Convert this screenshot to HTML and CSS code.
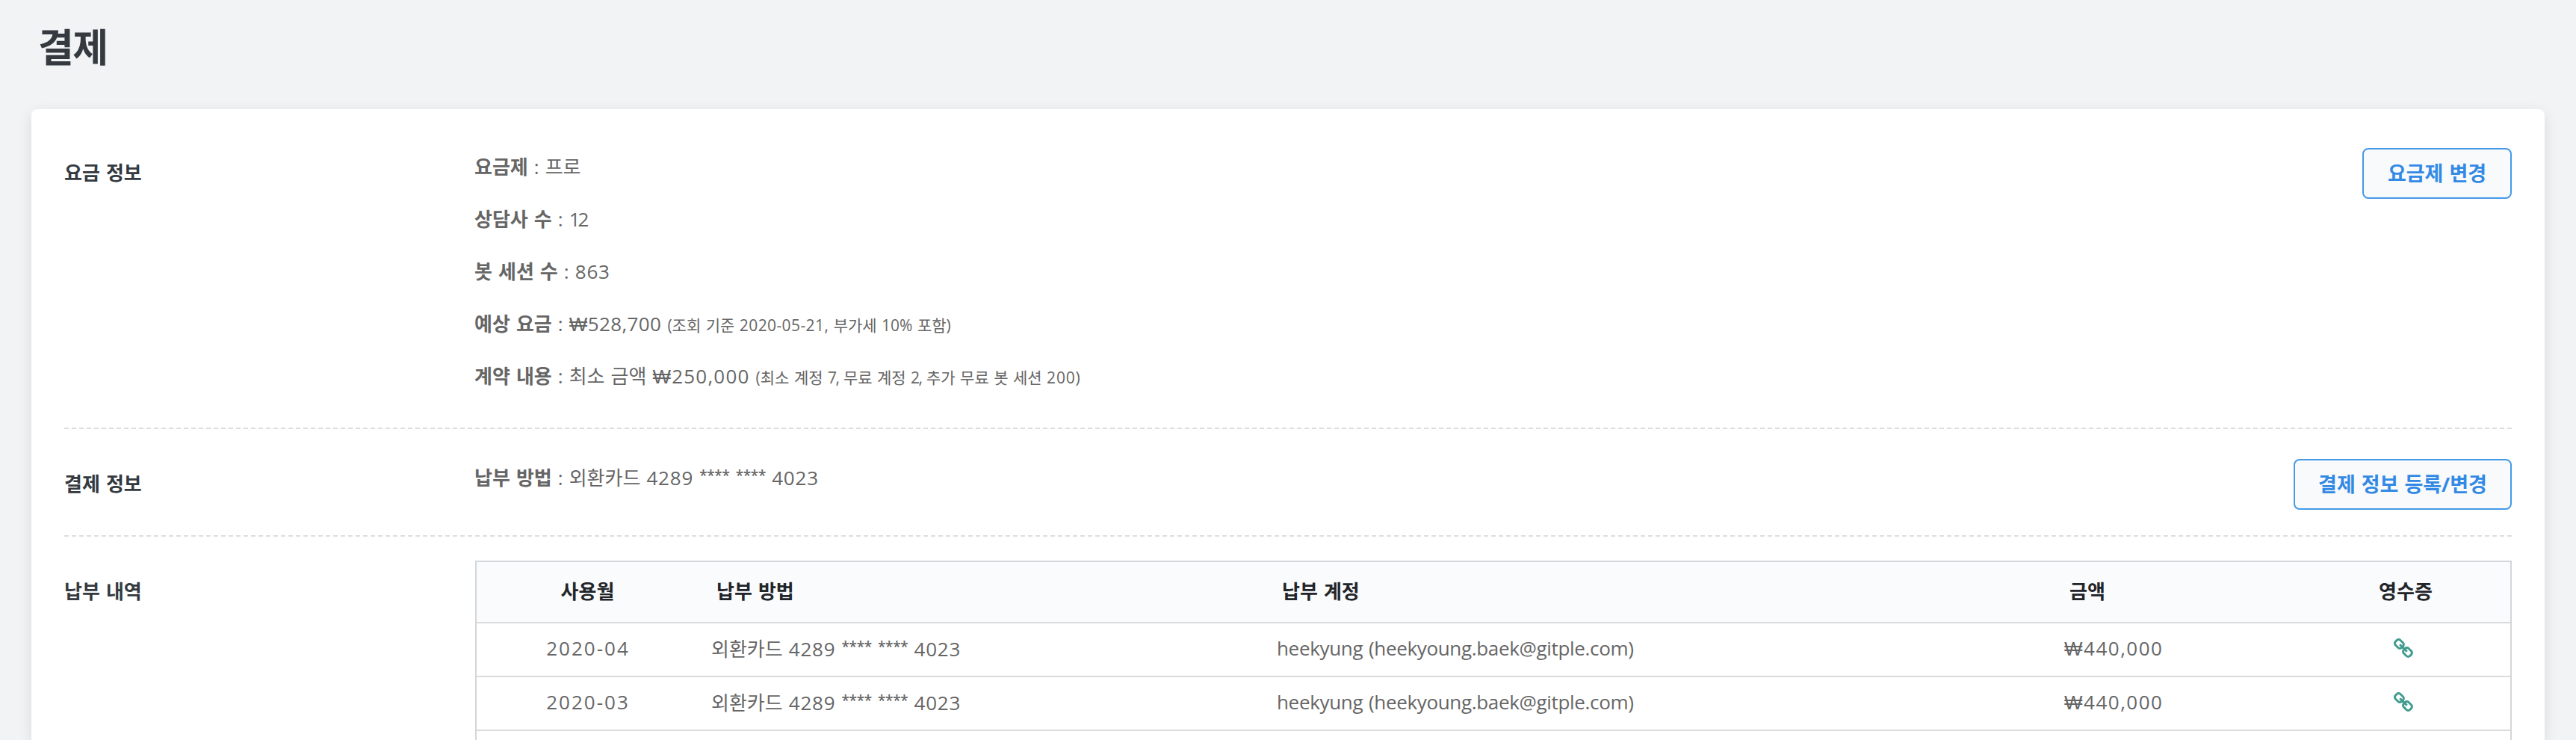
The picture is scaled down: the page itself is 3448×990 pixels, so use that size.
FILE: index.html
```html
<!DOCTYPE html>
<html lang="ko">
<head>
<meta charset="utf-8">
<title>결제</title>
<link rel="stylesheet" href="styles.css">
</head>
<body>
<svg width="0" height="0" class="defs" aria-hidden="true">
  <symbol id="link" viewBox="0 0 26 26">
    <g fill="none" stroke="currentColor" stroke-width="3" stroke-linecap="round">
      <rect x="-5.8" y="-4.6" width="11.6" height="9.2" rx="3.3" transform="translate(7.4 7.5) rotate(45)"/>
      <rect x="-5.8" y="-4.6" width="11.6" height="9.2" rx="3.3" transform="translate(18.5 18.5) rotate(45)"/>
      <path d="M9 9.2L17 16.8"/>
    </g>
  </symbol>
</svg>
<h1 class="title">결제</h1>
<main class="card">
  <section class="section">
    <h2 class="label">요금 정보</h2>
    <ul class="info">
      <li><b>요금제</b> : 프로</li>
      <li><b>상담사 수</b> : <span class="n-tight">12</span></li>
      <li><b>봇 세션 수</b> : <span class="n-s">863</span></li>
      <li><b>예상 요금</b> : <span class="n-xs">₩528,700</span> <small>(조회 기준 <span class="n-xs">2020-05-21,</span> 부가세 10% 포함)</small></li>
      <li><b>계약 내용</b> : 최소 금액 <span class="n-m">₩250,000</span> <small>(최소 계정 <span class="n-comma">7,</span> 무료 계정 <span class="n-comma">2,</span> 추가 무료 봇 세션 <span class="n-s">200)</span></small></li>
    </ul>
    <button class="btn btn-plan">요금제 변경</button>
  </section>
  <section class="section section-payment">
    <h2 class="label">결제 정보</h2>
    <ul class="info">
      <li><b>납부 방법</b> : 외환카드 <span class="n-s">4289</span> <span class="mask">****</span> <span class="mask">****</span> <span class="n-s">4023</span></li>
    </ul>
    <button class="btn btn-pay">결제 정보 등록/변경</button>
  </section>
  <section class="section section-history">
    <h2 class="label">납부 내역</h2>
    <table class="history">
      <colgroup><col class="c-month"><col class="c-method"><col class="c-account"><col class="c-amount"><col class="c-receipt"></colgroup>
      <thead>
        <tr><th class="center">사용월</th><th>납부 방법</th><th>납부 계정</th><th>금액</th><th class="center">영수증</th></tr>
      </thead>
      <tbody>
        <tr>
          <td class="center"><span class="n-l">2020-04</span></td>
          <td>외환카드 <span class="n-s">4289</span> <span class="mask">****</span> <span class="mask">****</span> <span class="n-s">4023</span></td>
          <td><span class="mail">heekyung (heekyoung.baek@gitple.com)</span></td>
          <td><span class="n-m2">₩440,000</span></td>
          <td class="center receipt"><svg class="icon"><use href="#link"/></svg></td>
        </tr>
        <tr>
          <td class="center"><span class="n-l">2020-03</span></td>
          <td>외환카드 <span class="n-s">4289</span> <span class="mask">****</span> <span class="mask">****</span> <span class="n-s">4023</span></td>
          <td><span class="mail">heekyung (heekyoung.baek@gitple.com)</span></td>
          <td><span class="n-m2">₩440,000</span></td>
          <td class="center receipt"><svg class="icon"><use href="#link"/></svg></td>
        </tr>
      </tbody>
    </table>
  </section>
</main>
</body>
</html>
```
FILE: styles.css
```css
* { box-sizing: border-box; }
html { overflow: hidden; }
body {
  margin: 0;
  height: 990px;
  overflow: hidden;
  padding: 0 42px;
  background: #f1f3f5;
  color: #666;
  font: 26px "Open Sans", "Noto Sans CJK KR", sans-serif;
  word-spacing: 1.3px;
  display: flex;
  flex-direction: column;
}
.defs { position: absolute; }
.title {
  margin: 0;
  padding: 27px 9px 0;
  height: 146px;
  flex: none;
  font-size: 52px;
  line-height: 72px;
  letter-spacing: -1.5px;
  font-weight: 700;
  color: #343a40;
}
.card {
  flex: none;
  height: 844px;
  padding: 12px 44px 0;
  border-radius: 8px 8px 0 0;
  background: #fff;
  box-shadow: 0 6px 20px rgba(0, 0, 0, .1);
}
.section {
  display: grid;
  grid-template-columns: 550px 1fr auto;
  align-items: start;
  padding: 30px 0 34px;
  border-bottom: 2px dashed #ddd;
}
.section-payment { padding-bottom: 40px; }
.section-history { grid-template-columns: 550px 1fr; padding-bottom: 0; border-bottom: 0; }
.label {
  margin: 0;
  height: 70px;
  font-size: 26px;
  line-height: 87px;
  font-weight: 700;
  color: #343a40;
}
.info { list-style: none; margin: 0 0 0 -1px; padding: 0; }
.info li { height: 70px; line-height: 70px; white-space: nowrap; }
.info small { font-size: 21px; word-spacing: 1px; }
.btn {
  height: 68px;
  margin: 10px 0 -6px;
  padding: 0 0 3px;
  border: 2px solid #459ae8;
  border-radius: 8px;
  background: #f9fafc;
  color: #338ae5;
  font: 700 27px "Open Sans", "Noto Sans CJK KR", sans-serif;
  word-spacing: 1px;
}
.btn-plan { width: 200px; }
.btn-pay { width: 292px; }
.history {
  width: 2726px;
  height: 240px;
  margin-top: 2px;
  padding-bottom: 12px;
  table-layout: fixed;
  border-collapse: separate;
  border-spacing: 0;
  border: 2px solid #d3d6da;
  border-bottom: 0;
}
.c-month { width: 296px; }
.c-method { width: 757px; }
.c-account { width: 1054px; }
.c-amount { width: 334px; }
.history th {
  height: 82px;
  padding: 0 24px 5px 25px;
  border-bottom: 2px solid #dadbdc;
  background: #fafbfd;
  color: #212529;
  font-weight: 700;
  text-align: left;
}
.history td { height: 72px; padding: 0 16px 4px 18px; border-bottom: 2px solid #dadbdc; }
.history .center { text-align: center; }
.history .receipt { padding-right: 24px; line-height: 0; }
.icon { width: 26px; height: 26px; color: #419c90; }
.n-tight { letter-spacing: -3px; }
.n-comma { letter-spacing: -1.5px; }
.n-xs { letter-spacing: .4px; }
.n-s { letter-spacing: .8px; }
.n-m { letter-spacing: 1.2px; }
.n-m2 { letter-spacing: 1.5px; }
.n-xs, .n-m, .n-m2 { font-family: "Open Sans", "Liberation Sans", sans-serif; }
.n-l { letter-spacing: 2px; }
.mail { letter-spacing: -.33px; }
.mask { font-size: 19px; font-weight: 600; line-height: 0; letter-spacing: -.3px; vertical-align: 6px; }
```
